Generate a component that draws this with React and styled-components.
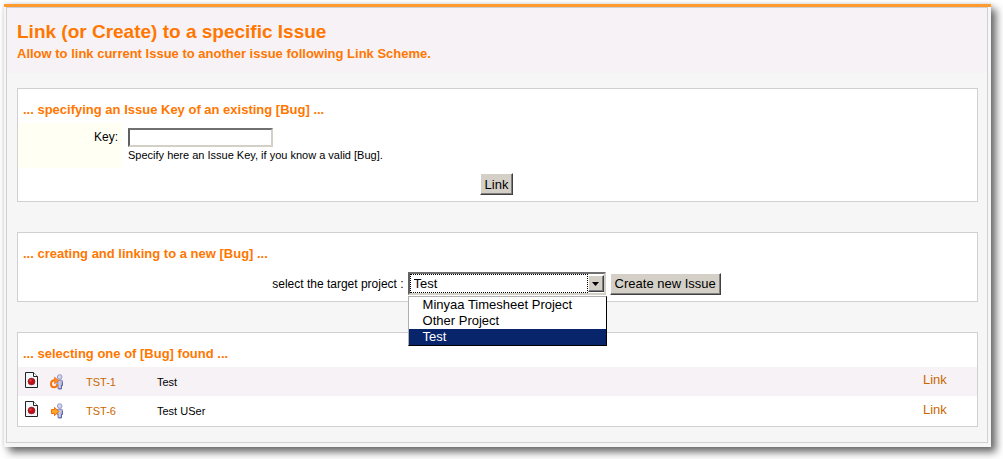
import { useState } from "react"
import styled, { createGlobalStyle } from "styled-components"

const GlobalStyle = createGlobalStyle`
  body {
    margin: 0;
    background: #ffffff;
    color: #000000;
    font-family: "Liberation Sans", Arial, sans-serif;
    font-size: 12px;
  }
  *, *::before, *::after {
    box-sizing: border-box;
  }
`

const Sheet = styled.main`
  margin: 4px 12px 12px 4px;
  padding: 0 3px 4px 2px;
  border-top: 3px solid #ff9a2e;
  background: #f6f6f6;
  box-shadow: 5px 5px 8px #666666, 0 0 4px #dddddd;
`

const Content = styled.div`
  border: 1px solid #d0d0d0;
  padding-bottom: 15px;
`

const Header = styled.header`
  background: #f6f2f6;
  padding: 12px 10px 9px;
`

const Title = styled.h1`
  margin: 0;
  color: #ff7700;
  font-size: 19px;
  line-height: 24px;
`

const Subtitle = styled.p`
  margin: 0;
  color: #ff7700;
  font-size: 13px;
  font-weight: bold;
  line-height: 20px;
`

const Panels = styled.div`
  display: grid;
  gap: 30px;
  padding: 15px 9px 0 10px;
`

const Panel = styled.section`
  border: 1px solid #d0d0d0;
  background: #ffffff;
`

const PanelTitle = styled.h2`
  margin: 0;
  padding: 12px 5px 4px;
  color: #ff7700;
  font-size: 13px;
  line-height: 18px;
`

const FieldRow = styled.div`
  display: grid;
  grid-template-columns: 104px 1fr;
`

const FieldLabel = styled.label`
  background: #fffff4;
  padding: 6px 4px;
  font-size: 12px;
  line-height: 16px;
  text-align: right;
`

const Field = styled.div`
  padding: 5px 6px 4px;
  font-size: 11px;
`

const TextInput = styled.input`
  display: block;
  width: 145px;
  height: 19px;
  border: 2px solid;
  border-color: #707070 #d4d0c8 #d4d0c8 #606060;
  outline: none;
  background: #ffffff;
  font-family: inherit;
  font-size: 13px;
`

const Hint = styled.div`
  line-height: 17px;
`

const ActionRow = styled.div`
  display: flex;
  justify-content: center;
  align-items: center;
  gap: 4px;
  padding: 5px 2px 6px 0;
`

const ActionLabel = styled.label`
  font-size: 12px;
`

const Button = styled.button`
  height: 22px;
  padding: 0 4px;
  border: 1px solid;
  border-color: #ffffff #404040 #404040 #ffffff;
  border-radius: 0;
  box-shadow: inset -1px -1px #808080;
  background: #d4d0c8;
  color: #000000;
  font-family: inherit;
  font-size: 13px;
  white-space: nowrap;
`

const SelectBox = styled.div`
  position: relative;
  width: 198px;
  height: 23px;
  border: 2px solid;
  border-color: #707070 #d4d0c8 #d4d0c8 #606060;
  background: #ffffff;
  display: grid;
  grid-template-columns: 1fr 16px;
`

const Select = styled.select`
  appearance: none;
  width: 100%;
  height: 19px;
  padding: 0 3px;
  border: 1px dotted #000000;
  border-radius: 0;
  outline: none;
  background: #ffffff;
  color: #000000;
  font-family: inherit;
  font-size: 13px;
`

const SelectArrow = styled.span`
  display: grid;
  place-items: center;
  margin: 1px 0;
  border: 1px solid;
  border-color: #ffffff #404040 #404040 #ffffff;
  box-shadow: inset -1px -1px #808080;
  background: #d4d0c8;
`

const Menu = styled.ul`
  position: absolute;
  z-index: 1;
  top: 22px;
  left: -2px;
  width: 199px;
  margin: 0;
  padding: 0;
  border: 1px solid;
  border-color: #b0b0b0 #000000 #000000 #b0b0b0;
  background: #ffffff;
  list-style: none;
`

const MenuItem = styled.li`
  padding: 0 14px;
  background: ${({ $active }) => ($active ? "#08246b" : "#ffffff")};
  color: ${({ $active }) => ($active ? "#ffffff" : "#000000")};
  font-size: 13px;
  line-height: 16px;
  cursor: default;
`

const IssueTable = styled.table`
  width: 100%;
  table-layout: fixed;
  border-collapse: collapse;
`

const IssueRow = styled.tr`
  height: 30px;
  background: ${({ $shaded }) => ($shaded ? "#f6f2f6" : "#ffffff")};

  &:first-child {
    height: 29px;
  }
`

const Cell = styled.td`
  width: ${({ $width }) => $width || "auto"};
  padding: 0 0 ${({ $raised }) => ($raised ? "4px" : "0")} ${({ $indent }) => $indent || "0"};
  font-size: ${({ $size }) => $size || "11px"};

  svg {
    display: block;
  }
`

const IssueLink = styled.a`
  color: #cc6600;
  text-decoration: none;
`

const BugIcon = () => (
  <svg width="13" height="16" viewBox="0 0 13 16" aria-hidden="true">
    <path d="M.5.5h8l4 4v11H.5z" fill="#f0f6fa" stroke="#222" />
    <path d="M8.5.5v4h4" fill="#fff" stroke="#222" />
    <circle cx="6.5" cy="9.5" r="3.6" fill="#c00f17" />
    <circle cx="6.5" cy="9.5" r="3.4" fill="none" stroke="#7c3030" strokeWidth=".6" />
    <circle cx="5.5" cy="8.5" r="1.2" fill="#e04040" />
  </svg>
)

const Person = () => (
  <>
    <circle cx="9.7" cy="3" r="2.3" fill="#d2d6ec" stroke="#9498c8" />
    <path
      d="M7 7.4q0-1.2 1.2-1.2h3.1q1.2 0 1.2 1.2v4h-1v3.4H8v-3.4H7z"
      fill="#b0b4d8"
      stroke="#8084b8"
    />
    <path d="M9.7 7v7" stroke="#ccd0ea" strokeWidth="1.2" />
    <path d="M12.5 8v3.4h-1v3.4H8.5" fill="none" stroke="#5a5fa0" strokeWidth=".8" />
  </>
)

const ReopenedIcon = () => (
  <svg width="14" height="16" viewBox="0 0 14 16" aria-hidden="true">
    <Person />
    <path
      d="M7.2 10.2c0 2-1.3 3.1-3.1 3.1-1.9 0-3.1-1.5-3.1-3.5 0-2.2 1.5-3.6 3.8-3.6"
      fill="none"
      stroke="#f8740c"
      strokeWidth="2"
    />
    <path d="M4.6 3.3l4.2 3.2-4.2 3.2z" fill="#ff9422" stroke="#f46a10" strokeWidth=".8" />
  </svg>
)

const OpenIcon = () => (
  <svg width="14" height="16" viewBox="0 0 14 16" aria-hidden="true">
    <Person />
    <path
      d="M1.5 6.5h3V4.3l4.2 4.2-4.2 4.2v-2.2h-3z"
      fill="#ffa81c"
      stroke="#f46a10"
    />
  </svg>
)

const projects = ["Minyaa Timesheet Project", "Other Project", "Test"]

const issues = [
  { key: "TST-1", summary: "Test", reopened: true },
  { key: "TST-6", summary: "Test USer", reopened: false }
]

const App = () => {
  const [issueKey, setIssueKey] = useState("")
  const [project, setProject] = useState("Test")
  const [open, setOpen] = useState(true)

  const chooseProject = (name) => {
    setProject(name)
    setOpen(false)
  }

  return (
    <>
      <GlobalStyle />
      <Sheet>
        <Content>
          <Header>
            <Title>Link (or Create) to a specific Issue</Title>
            <Subtitle>Allow to link current Issue to another issue following Link Scheme.</Subtitle>
          </Header>
          <Panels>
            <Panel>
              <PanelTitle>... specifying an Issue Key of an existing [Bug] ...</PanelTitle>
              <FieldRow>
                <FieldLabel htmlFor="issue-key">Key:</FieldLabel>
                <Field>
                  <TextInput
                    id="issue-key"
                    type="text"
                    value={issueKey}
                    onChange={(event) => setIssueKey(event.target.value)}
                  />
                  <Hint>Specify here an Issue Key, if you know a valid [Bug].</Hint>
                </Field>
              </FieldRow>
              <ActionRow>
                <Button type="button">Link</Button>
              </ActionRow>
            </Panel>

            <Panel>
              <PanelTitle>... creating and linking to a new [Bug] ...</PanelTitle>
              <ActionRow>
                <ActionLabel htmlFor="project">select the target project :</ActionLabel>
                <SelectBox>
                  <Select
                    id="project"
                    value={project}
                    onChange={(event) => chooseProject(event.target.value)}
                  >
                    {projects.map((name) => (
                      <option key={name}>{name}</option>
                    ))}
                  </Select>
                  <SelectArrow onClick={() => setOpen(!open)}>
                    <svg width="7" height="4" viewBox="0 0 7 4" aria-hidden="true">
                      <path d="M0 0h7L3.5 4z" />
                    </svg>
                  </SelectArrow>
                  {open && (
                    <Menu>
                      {projects.map((name) => (
                        <MenuItem
                          key={name}
                          $active={name === project}
                          onClick={() => chooseProject(name)}
                        >
                          {name}
                        </MenuItem>
                      ))}
                    </Menu>
                  )}
                </SelectBox>
                <Button type="button">Create new Issue</Button>
              </ActionRow>
            </Panel>

            <Panel>
              <PanelTitle>... selecting one of [Bug] found ...</PanelTitle>
              <IssueTable>
                <tbody>
                  {issues.map((issue, index) => (
                    <IssueRow key={issue.key} $shaded={index % 2 === 0}>
                      <Cell $width="32px" $indent="7px" $raised><BugIcon /></Cell>
                      <Cell $width="36px">{issue.reopened ? <ReopenedIcon /> : <OpenIcon />}</Cell>
                      <Cell $width="71px"><IssueLink href="#">{issue.key}</IssueLink></Cell>
                      <Cell>{issue.summary}</Cell>
                      <Cell $width="54px" $size="13px" $raised><IssueLink href="#">Link</IssueLink></Cell>
                    </IssueRow>
                  ))}
                </tbody>
              </IssueTable>
            </Panel>
          </Panels>
        </Content>
      </Sheet>
    </>
  )
}

export default App
